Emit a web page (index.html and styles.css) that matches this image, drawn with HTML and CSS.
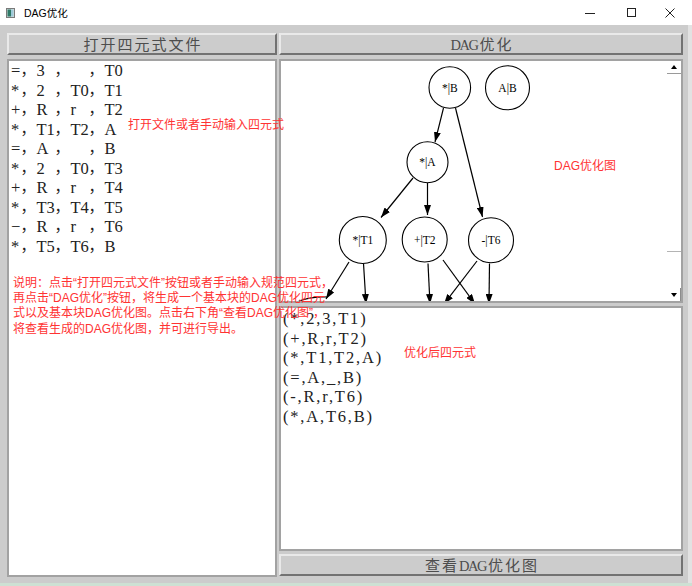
FILE: index.html
```html
<!DOCTYPE html>
<html lang="zh">
<head>
<meta charset="utf-8">
<title>DAG优化</title>
<link rel="stylesheet" href="styles.css">
</head>
<body>
<div class="window">
  <header class="titlebar">
    <svg class="app-icon" width="9" height="10" viewBox="0 0 9 10">
      <rect x="0.5" y="0.5" width="8" height="9" fill="#d6dcdc" stroke="#7a7a7a"/>
      <rect x="1.5" y="1.5" width="3.5" height="7" fill="#2f7a68"/>
      <rect x="5" y="1.5" width="2.5" height="7" fill="#9cc9d8"/>
    </svg>
    <span class="title">DAG优化</span>
    <div class="controls">
      <span class="ctl-min"></span>
      <span class="ctl-max"></span>
      <svg class="ctl-close" width="10" height="10" viewBox="0 0 10 10">
        <path d="M0.5 0.5 L9.5 9.5 M9.5 0.5 L0.5 9.5" stroke="#222" stroke-width="1"/>
      </svg>
    </div>
  </header>
  <main class="body">
    <button class="btn">打开四元式文件</button>
    <button class="btn"><span class="lat">DAG</span>优化</button>
    <div class="panel input">
      <div class="q"><span class="a">=</span><span class="c">，</span><span class="b">3</span><span class="c">，</span><span class="b"></span><span class="c">，</span><span class="b">T0</span></div>
      <div class="q"><span class="a">*</span><span class="c">，</span><span class="b">2</span><span class="c">，</span><span class="b">T0</span><span class="c">，</span><span class="b">T1</span></div>
      <div class="q"><span class="a">+</span><span class="c">，</span><span class="b">R</span><span class="c">，</span><span class="b">r</span><span class="c">，</span><span class="b">T2</span></div>
      <div class="q"><span class="a">*</span><span class="c">，</span><span class="b">T1</span><span class="c">，</span><span class="b">T2</span><span class="c">，</span><span class="b">A</span></div>
      <div class="q"><span class="a">=</span><span class="c">，</span><span class="b">A</span><span class="c">，</span><span class="b"></span><span class="c">，</span><span class="b">B</span></div>
      <div class="q"><span class="a">*</span><span class="c">，</span><span class="b">2</span><span class="c">，</span><span class="b">T0</span><span class="c">，</span><span class="b">T3</span></div>
      <div class="q"><span class="a">+</span><span class="c">，</span><span class="b">R</span><span class="c">，</span><span class="b">r</span><span class="c">，</span><span class="b">T4</span></div>
      <div class="q"><span class="a">*</span><span class="c">，</span><span class="b">T3</span><span class="c">，</span><span class="b">T4</span><span class="c">，</span><span class="b">T5</span></div>
      <div class="q"><span class="a">−</span><span class="c">，</span><span class="b">R</span><span class="c">，</span><span class="b">r</span><span class="c">，</span><span class="b">T6</span></div>
      <div class="q"><span class="a">*</span><span class="c">，</span><span class="b">T5</span><span class="c">，</span><span class="b">T6</span><span class="c">，</span><span class="b">B</span></div>
    </div>
    <div class="right">
      <div class="panel graph">
        <svg class="dag" width="386" height="240" viewBox="0 0 386 240">
          <defs>
            <marker id="arrow" markerUnits="userSpaceOnUse" markerWidth="10" markerHeight="7" refX="10" refY="3.5" orient="auto">
              <path d="M0,0 L10,3.5 L0,7 z" fill="#000"/>
            </marker>
          </defs>
          <g transform="translate(-281,-61)">
            <g class="edges">
              <path d="M443.5,108 L435,142" marker-end="url(#arrow)"/>
              <path d="M455.5,108 L482.5,217" marker-end="url(#arrow)"/>
              <path d="M413,178 L381,217.5" marker-end="url(#arrow)"/>
              <path d="M427.5,183 L427.5,215" marker-end="url(#arrow)"/>
              <path d="M349,262 L326,299" marker-end="url(#arrow)"/>
              <path d="M363.5,263.5 L366,304" marker-end="url(#arrow)"/>
              <path d="M428,263.5 L430,304" marker-end="url(#arrow)"/>
              <path d="M443,260 L475,304" marker-end="url(#arrow)"/>
              <path d="M477,261 L444,304" marker-end="url(#arrow)"/>
              <path d="M489.5,263.5 L489,304" marker-end="url(#arrow)"/>
            </g>
            <path class="edge-plain" d="M293,304 Q308,296 327,297"/>
            <g class="nodes">
              <circle cx="449.8" cy="87.5" r="20.8"/>
              <circle cx="507.5" cy="87.8" r="22"/>
              <circle cx="427.5" cy="162.2" r="20.5"/>
              <circle cx="362.8" cy="240" r="23.5"/>
              <circle cx="424.7" cy="239.5" r="22.5"/>
              <circle cx="491" cy="240.3" r="22.5"/>
            </g>
            <g class="labels">
              <text x="449.8" y="87.5">*|B</text>
              <text x="507.5" y="87.8">A|B</text>
              <text x="427.5" y="162.2">*|A</text>
              <text x="362.8" y="240">*|T1</text>
              <text x="424.7" y="239.5">+|T2</text>
              <text x="491" y="240.3">-|T6</text>
            </g>
          </g>
        </svg>
        <div class="scrollbar">
          <div class="sb-up"><span class="tri-up"></span></div>
          <div class="sb-thumb"></div>
          <div class="sb-trough"></div>
          <div class="sb-down"><span class="tri-down"></span></div>
        </div>
      </div>
      <pre class="panel output">(*,2,3,T1)
(+,R,r,T2)
(*,T1,T2,A)
(=,A,_,B)
(-,R,r,T6)
(*,A,T6,B)</pre>
      <button class="btn">查看<span class="lat">DAG</span>优化图</button>
    </div>
  </main>
  <div class="note note-input">打开文件或者手动输入四元式</div>
  <div class="note note-help">说明：点击“打开四元式文件”按钮或者手动输入规范四元式，<br>再点击“DAG优化”按钮，将生成一个基本块的DAG优化四元<br>式以及基本块DAG优化图。点击右下角“查看DAG优化图”，<br>将查看生成的DAG优化图，并可进行导出。</div>
  <div class="note note-graph">DAG优化图</div>
  <div class="note note-output">优化后四元式</div>
</div>
</body>
</html>
```

FILE: styles.css
```css
html {
  background: #cde0d3;
}

body {
  margin: 0;
  width: 692px;
  height: 586px;
  overflow: hidden;
}

.window {
  position: relative;
  width: 692px;
  height: 583px;
}

.titlebar {
  height: 25px;
  background: #ffffff;
  display: flex;
  align-items: center;
  box-sizing: border-box;
  padding-left: 6px;
}

.app-icon {
  display: block;
  margin-top: 1px;
}

.title {
  margin-left: 9px;
  font: 10.5px/14px "Liberation Sans", "Noto Sans CJK SC", sans-serif;
  color: #000;
}

.controls {
  margin-left: auto;
  display: flex;
  align-items: center;
  padding-right: 17px;
}

.ctl-min {
  display: block;
  width: 10px;
  height: 1px;
  background: #222;
  margin-top: 1px;
}

.ctl-max {
  display: block;
  width: 9px;
  height: 9px;
  box-sizing: border-box;
  border: 1px solid #222;
  margin-left: 32px;
}

.ctl-close {
  display: block;
  margin-left: 29px;
}

.body {
  box-sizing: border-box;
  height: 558px;
  background: #cccccc;
  border-right: 4px solid #e2e2e2;
  padding: 8px 5px 6px 7px;
  display: grid;
  grid-template-columns: 270px 404px;
  grid-template-rows: 22px 518px;
  column-gap: 2px;
  row-gap: 4px;
}

.btn {
  box-sizing: border-box;
  height: 22px;
  margin: 0;
  padding: 0 0 0 2px;
  background: #cccccc;
  border: 2px solid;
  border-color: #e9e9e9 #727272 #727272 #e9e9e9;
  font-family: "Noto Sans CJK SC", sans-serif;
  font-size: 15px;
  line-height: 18px;
  letter-spacing: 2px;
  color: #4d4d4d;
  text-align: center;
}

.lat {
  font-family: "Liberation Serif", serif;
  font-size: 14.5px;
  letter-spacing: -1.5px;
  margin-right: 2px;
}

.panel {
  box-sizing: border-box;
  margin: 0;
  background: #ffffff;
  border: 2px solid #a2a2a2;
  overflow: hidden;
}

.input {
  padding: 0 0 0 2px;
  height: 518px;
}

.q {
  height: 19.5px;
  line-height: 19.5px;
  white-space: nowrap;
  font-family: "Liberation Serif", "Noto Sans CJK SC", serif;
  font-size: 16.5px;
  color: #222;
}

.q span {
  display: inline-block;
  vertical-align: top;
}

.a {
  width: 8.5px;
}

.c {
  width: 17px;
  box-sizing: border-box;
  padding-left: 1px;
  font-size: 15px;
}

.b {
  width: 17px;
}

.output {
  height: 245px;
  flex: none;
  padding: 1px 0 0 2px;
  font-family: "Liberation Serif", serif;
  font-size: 16.5px;
  line-height: 19.5px;
  letter-spacing: 1.8px;
  color: #222;
}

.right {
  display: flex;
  flex-direction: column;
  gap: 3px;
}

.graph {
  height: 244px;
  display: flex;
  flex: none;
}

.dag {
  display: block;
  flex: none;
}

.edges path {
  fill: none;
  stroke: #000;
  stroke-width: 1.2;
}

.edge-plain {
  fill: none;
  stroke: #000;
  stroke-width: 1.1;
}

.nodes circle {
  fill: #fff;
  stroke: #000;
  stroke-width: 1.1;
}

.labels text {
  font-family: "Liberation Serif", serif;
  font-size: 11.5px;
  text-anchor: middle;
  dominant-baseline: central;
  fill: #000;
}

.scrollbar {
  width: 14px;
  display: flex;
  flex-direction: column;
  background: #fff;
}

.sb-up,
.sb-down {
  height: 12px;
  display: flex;
  align-items: center;
  justify-content: center;
  flex: none;
}

.sb-up {
  border-bottom: 1px solid #9a9a9a;
}

.sb-down {
  height: 13px;
  border-right: 1px solid #8c8c8c;
}

.sb-thumb {
  height: 178px;
  flex: none;
  box-sizing: border-box;
  border-bottom: 1px solid #b4b4b4;
}

.sb-trough {
  flex: 1;
}

.tri-up {
  width: 0;
  height: 0;
  border-left: 3.5px solid transparent;
  border-right: 3.5px solid transparent;
  border-bottom: 4px solid #000;
}

.tri-down {
  width: 0;
  height: 0;
  border-left: 3.5px solid transparent;
  border-right: 3.5px solid transparent;
  border-top: 4px solid #000;
}

.right .btn {
  flex: none;
}

.note {
  position: absolute;
  font-family: "Liberation Sans", "Noto Sans CJK SC", sans-serif;
  font-size: 12px;
  line-height: 15.3px;
  color: #ff3333;
  white-space: nowrap;
}

.note-input {
  left: 128px;
  top: 117.5px;
}

.note-help {
  left: 13px;
  top: 275.7px;
}

.note-graph {
  left: 554px;
  top: 159px;
}

.note-output {
  left: 404px;
  top: 345.8px;
}
```
